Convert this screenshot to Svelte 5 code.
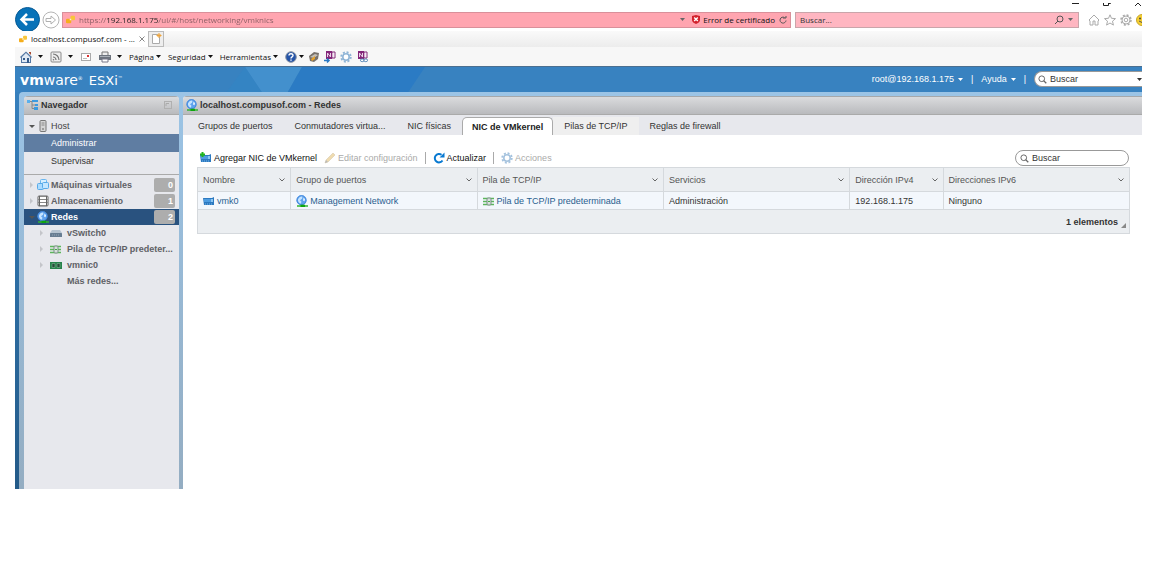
<script lang="ts">
	interface TreeItem {
		label: string;
		icon: string;
		count?: number;
		open?: boolean;
	}

	const baseUrl = 'https://192.168.1.175/ui/#/host/networking/vmknics';
	const menus = ['Página', 'Seguridad', 'Herramientas'];

	const inventory: TreeItem[] = [
		{ label: 'Máquinas virtuales', icon: 'vm', count: 0 },
		{ label: 'Almacenamiento', icon: 'storage', count: 1 },
		{ label: 'Redes', icon: 'network', count: 2, open: true }
	];

	const networks: TreeItem[] = [
		{ label: 'vSwitch0', icon: 'switch' },
		{ label: 'Pila de TCP/IP predeter...', icon: 'stack' },
		{ label: 'vmnic0', icon: 'nic' }
	];

	const tabs = [
		'Grupos de puertos',
		'Conmutadores virtua...',
		'NIC físicas',
		'NIC de VMkernel',
		'Pilas de TCP/IP',
		'Reglas de firewall'
	];

	const columns = [
		{ label: 'Nombre', size: 'narrow' },
		{ label: 'Grupo de puertos', size: 'wide' },
		{ label: 'Pila de TCP/IP', size: 'wide' },
		{ label: 'Servicios', size: 'wide' },
		{ label: 'Dirección IPv4', size: 'narrow' },
		{ label: 'Direcciones IPv6', size: 'wide' }
	];

	let url = $state(baseUrl);
	let activeTab = $state('NIC de VMkernel');
	let selected = $state('Redes');
</script>

{#snippet icon(name: string)}
	<svg class="icon" viewBox="0 0 12 12" aria-hidden="true">
		{#if name === 'vmware'}
			<rect x="0" y="5" width="7" height="6" rx="1.5" fill="#f5ae1c" />
			<rect x="6" y="1" width="6" height="6" rx="1.5" fill="#f8c63a" />
			<path d="M5 5h2v2H5z" fill="#fff3cf" />
		{:else if name === 'home'}
			<path d="M0 6L6 .5 12 6l-1 1v5H1V7z" fill="#5578a4" />
			<path d="M2 6l4-4 4 4v5H2z" fill="#dfe9f4" />
			<path d="M3 7h2v2H3zM7 7h2v5H7z" fill="#355b8a" />
			<path d="M9 1h2v3L9 2z" fill="#a64b32" />
		{:else if name === 'feed'}
			<rect x="1" y="1" width="10" height="10" rx="1" fill="#eee" stroke="#8a8a8a" />
			<path d="M3 3a6 6 0 0 1 6 6M3 6a3 3 0 0 1 3 3" fill="none" stroke="#777" stroke-width="1.2" />
			<circle cx="3.5" cy="8.7" r=".8" fill="#777" />
		{:else if name === 'mail'}
			<rect x="1.5" y="2.5" width="9" height="7" fill="#fff" stroke="#aaa" />
			<rect x="7" y="4" width="2" height="2" fill="#d33" />
			<path d="M3 7.5h4" stroke="#bbb" />
		{:else if name === 'print'}
			<path d="M3 1h6v4H3z" fill="#eee" stroke="#777" />
			<path d="M0 4h12v5H0z" fill="#6d747e" />
			<path d="M1 5h10v1H1z" fill="#a9afb7" />
			<path d="M3 8h6v3H3z" fill="#fff" stroke="#778" />
		{:else if name === 'help'}
			<circle cx="6" cy="6" r="5.3" fill="#2454a8" stroke="#8a94a3" />
			<path d="M4 4.5c0-2.4 4-2.2 4 0 0 1.5-2 1.3-2 3M6 8.5v1.2" fill="none" stroke="#fff" stroke-width="1.4" />
		{:else if name === 'bird'}
			<path d="M1 5l5-4 5 1-1 6-4 3-4-1z" fill="#77716b" />
			<path d="M2 6l5-3 3 1-4 3z" fill="#c4c0b9" />
			<path d="M3 8l4-3v3l-3 2z" fill="#e6a22b" />
		{:else if name === 'onenote' || name === 'onenote-link'}
			<path d="M2 0h6v8H2z" fill="#832679" />
			<path d="M8 1h3v6H8z" fill="#fff" stroke="#832679" />
			<path d="M3.5 6V2l3 4V2M8 3h2M8 5h2" fill="none" stroke="#e9d3e7" />
			{#if name === 'onenote'}
				<path d="M0 9.5h5M3 7.5l2 2-2 2" fill="none" stroke="#2878c4" stroke-width="1.5" />
			{:else}
				<rect x="4.5" y="8" width="3.5" height="2.6" rx="1.3" fill="#fff" stroke="#5284b5" />
				<rect x="8" y="8" width="3.5" height="2.6" rx="1.3" fill="#fff" stroke="#5284b5" />
			{/if}
		{:else if name === 'gear'}
			<circle cx="6" cy="6" r="4.8" fill="none" stroke="#8fb4d6" stroke-width="1.8" stroke-dasharray="2 1.77" />
			<circle cx="6" cy="6" r="3.2" fill="#fff" stroke="#8fb4d6" stroke-width="1.6" />
		{:else if name === 'tree'}
			<path d="M2 2.5h9M5 2v7.5h5M5 6h5" fill="none" stroke="#888" />
			<rect x="0" y="1" width="3" height="3" fill="#5bb0ec" />
			<rect x="5" y="1" width="6" height="2" fill="#3c9adf" />
			<rect x="8" y="5" width="3" height="2" fill="#3c9adf" />
			<rect x="7" y="8" width="4" height="3" fill="#3c9adf" />
		{:else if name === 'host'}
			<rect x="3" y=".5" width="6" height="11" rx="1" fill="#d5d5d5" stroke="#777" />
			<path d="M4.5 3h3M4.5 5h3" stroke="#888" />
			<circle cx="6" cy="9" r=".8" fill="#555" />
		{:else if name === 'vm'}
			<rect x="3.5" y=".5" width="6" height="6" rx="1" fill="#d6efff" stroke="#6ab6ef" />
			<rect x=".5" y="4.5" width="6" height="6" rx="1" fill="#aadbff" stroke="#58aae8" />
			<rect x="5.5" y="3.5" width="6" height="6" rx="1" fill="#c5e7ff" stroke="#58aae8" />
		{:else if name === 'storage'}
			<rect x="1" y="1" width="10" height="10" rx="1" fill="#fff" stroke="#666" />
			<path d="M1 1.5h10M1 4.5h10M1 7.5h10M1 10.5h10" stroke="#888" />
			<path d="M2.5 1v10M9.5 1v10" stroke="#666" />
		{:else if name === 'network'}
			<circle cx="5.5" cy="5.2" r="5" fill="#5fa3ee" />
			<circle cx="5.5" cy="5.2" r="4.6" fill="none" stroke="#3c82d8" stroke-width=".8" />
			<path d="M3.5 2.2q2-1.4 3-.4l-.5 2-2 1.4 1.5 1.5-.8 2q-2-.5-2.7-2.6t1.5-3.9z" fill="#c4e3ff" />
			<path d="M7.5 2.5l1.6 1.8-.6 2L7 5.5z" fill="#dff1ff" />
			<path d="M1 11h11" stroke="#31b531" stroke-width="1.5" />
			<rect x="4.5" y="9.7" width="4.5" height="2.3" fill="#0fa50f" />
		{:else if name === 'switch'}
			<path d="M2 3h8l2 3H0z" fill="#b5c3d0" />
			<rect x="0" y="6" width="12" height="4" rx=".5" fill="#677d92" />
			<path d="M2 8h8" stroke="#95a6b7" stroke-dasharray="1 1" />
		{:else if name === 'stack'}
			<path d="M0 3.5h11M0 6.5h11M0 9.5h11" stroke="#5bb65b" stroke-width="1.3" />
			<rect x="4" y="3" width="4" height="7" rx="1" fill="#d7e1dc" stroke="#7c8f88" />
			<path d="M5 6.5h2" stroke="#43ad43" />
		{:else if name === 'nic'}
			<rect x="0" y="3" width="12" height="7" fill="#27834b" />
			<path d="M2 4.5h3v4H2zM7 4.5h3v4H7z" fill="#254a38" stroke="#80b292" stroke-width=".6" />
		{:else if name === 'vmk' || name === 'vmk-add'}
			<path d="M0 3h9l2-1v8H1z" fill="#2c79c0" />
			<path d="M1 4h9v3H1z" fill="#4d9ce0" />
			<path d="M8 4h2v3H8z" fill="#8cc6f3" />
			<path d="M2 9h8" stroke="#79b5e6" stroke-dasharray="1 1" />
			{#if name === 'vmk-add'}
				<path d="M2.5 0v5M0 2.5h5" stroke="#20b51d" stroke-width="2" />
			{/if}
		{:else if name === 'edit'}
			<path d="M1 11l1-3 7-7 2 2-7 7z" fill="#ecd39c" stroke="#c5b38f" stroke-width=".5" />
			<path d="M1 11l1-3 2 2z" fill="#aaa" />
		{:else if name === 'refresh'}
			<path d="M9.5 8.5A4.2 4.2 0 1 1 8.5 2.8" fill="none" stroke="#0879d1" stroke-width="2" />
			<path d="M6.5 5.5h5V.5z" fill="#0879d1" />
		{:else if name === 'search'}
			<circle cx="5" cy="5" r="3.8" fill="none" stroke="#666" stroke-width="1.3" />
			<path d="M7.5 7.5L11 11" stroke="#666" stroke-width="1.8" />
		{/if}
	</svg>
{/snippet}

{#snippet caret()}
	<svg class="caret" viewBox="0 0 5 3" aria-hidden="true"><path d="M0 0h5L2.5 3z" fill="currentColor" /></svg>
{/snippet}

<div class="screen">
	<div class="window">
		<div class="window-controls">
			<button aria-label="Minimizar"><svg viewBox="0 0 8 6"><path d="M0 3.5h7" stroke="#222" /></svg></button>
			<button aria-label="Restaurar"><svg viewBox="0 0 8 6"><path d="M.5 3v2.5h5V3M5 3.5h2.5V3" fill="none" stroke="#222" /></svg></button>
			<button aria-label="Cerrar"><svg viewBox="0 0 8 6"><path d="M1 6l3-3 3 3" fill="none" stroke="#222" /></svg></button>
		</div>

		<div class="address-row">
			<button class="back" aria-label="Atrás">
				<svg viewBox="0 0 25 25">
					<circle cx="12.5" cy="12.5" r="12" fill="#0872b8" stroke="#075b96" />
					<path d="M19 12.5H7M12 7l-5.5 5.5L12 18" fill="none" stroke="#fff" stroke-width="2.5" />
				</svg>
			</button>
			<button class="forward" aria-label="Adelante">
				<svg viewBox="0 0 18 18">
					<circle cx="9" cy="9" r="8" fill="#fff" stroke="#b5b5b5" />
					<path d="M4 7.5h5V5l4.5 4L9 13v-2.5H4z" fill="#fff" stroke="#b0b0b0" />
				</svg>
			</button>
			<div class="address">
				{@render icon('vmware')}
				<input class="url" aria-label="Dirección" bind:value={url} />
				{@render caret()}
				<div class="certificate">
					<svg class="shield" viewBox="0 0 8 9" aria-hidden="true">
						<path d="M4 0l4 1v4c0 2-2 3-4 4-2-1-4-2-4-4V1z" fill="#d2222c" />
						<path d="M2.2 2.5l3.6 3.6M5.8 2.5L2.2 6.1" stroke="#fff" stroke-width="1.4" />
					</svg>
					<span>Error de certificado</span>
				</div>
				<button aria-label="Recargar">
					<svg class="reload" viewBox="0 0 8 8"><path d="M7 4.5A3 3 0 1 1 5.5 1.5M4 2h3V0" fill="none" stroke="#555" /></svg>
				</button>
			</div>
			<div class="address web-search">
				<input aria-label="Buscar en la web" placeholder="Buscar..." />
				<svg class="lens" viewBox="0 0 10 10" aria-hidden="true">
					<circle cx="6" cy="4" r="3" fill="none" stroke="#555" /><path d="M4 6L1 9" stroke="#555" />
				</svg>
				{@render caret()}
			</div>
			<div class="browser-tools">
				<button aria-label="Inicio"><svg viewBox="0 0 12 12"><path d="M1 6l5-5 5 5-1 1v4H7V7H5v4H2V7z" fill="#fff" stroke="#aaa" /></svg></button>
				<button aria-label="Favoritos"><svg viewBox="0 0 12 12"><path d="M6 .8l1.500 3.500 4 .3-3 2.600.9 3.900L6 9l-3.400 2.100.9-3.900-3-2.600 4-.3z" fill="#fff" stroke="#aaa" /></svg></button>
				<button aria-label="Herramientas"><svg viewBox="0 0 12 12"><circle cx="6" cy="6" r="5" fill="none" stroke="#aaa" stroke-width="1.5" stroke-dasharray="2 1.93" /><circle cx="6" cy="6" r="4" fill="#fff" stroke="#aaa" /><circle cx="6" cy="6" r="1.8" fill="none" stroke="#aaa" /></svg></button>
				<button class="smile" aria-label="Comentarios"><svg viewBox="0 0 12 12"><circle cx="6" cy="6" r="5.5" fill="#f6cf31" stroke="#c6a52d" /><circle cx="4" cy="4.5" r="1" fill="#444" /><path d="M3 7q3 3 6 0" fill="none" stroke="#555" /></svg></button>
			</div>
		</div>

		<div class="page-tabs">
			<button class="page-tab">
				{@render icon('vmware')}
				<span>localhost.compusof.com - ...</span>
				<svg class="close" viewBox="0 0 6 6"><path d="M.5 .5l5 5M5.5 .5l-5 5" stroke="#888" /></svg>
			</button>
			<button class="new-tab" aria-label="Nueva pestaña">
				<svg viewBox="0 0 12 12"><path d="M2.5 1.5h5l2 2v7h-7z" fill="#fff" stroke="#aaa" /><path d="M9 0v5M6.5 2.5h5M7.5 1l3 3M10.5 1l-3 3" stroke="#efa43a" /></svg>
			</button>
		</div>

		<div class="command-bar">
			<button aria-label="Página principal">{@render icon('home')}{@render caret()}</button>
			<button aria-label="Fuentes">{@render icon('feed')}{@render caret()}</button>
			<button aria-label="Correo">{@render icon('mail')}</button>
			<button aria-label="Imprimir">{@render icon('print')}{@render caret()}</button>
			{#each menus as menu}
				<button class="menu">{menu}{@render caret()}</button>
			{/each}
			<div class="add-ons">
				<button class="menu" aria-label="Ayuda">{@render icon('help')}{@render caret()}</button>
				<button aria-label="Traducir">{@render icon('bird')}</button>
				<button aria-label="Enviar a OneNote">{@render icon('onenote')}</button>
				<button aria-label="Opciones">{@render icon('gear')}</button>
				<button aria-label="Notas vinculadas">{@render icon('onenote-link')}</button>
			</div>
		</div>

		<div class="esxi">
			<header class="masthead">
				<svg class="facets" viewBox="0 0 460 30" aria-hidden="true">
					<path d="M230 0h57l-17 30h-20z" fill="#4390cd" />
					<path d="M230 0l-22 30h42z" fill="#3484c3" />
					<path d="M287 0h123l-20 30H270z" fill="#2b7bc4" />
				</svg>
				<div class="logo"><span><b>vm</b>ware<sup>®</sup></span><span class="product">ESXi<sup>™</sup></span></div>
				<div class="account">
					<button>root@192.168.1.175 {@render caret()}</button>
					<span>|</span>
					<button>Ayuda {@render caret()}</button>
					<span>|</span>
					<div class="search global">
						{@render icon('search')}
						<input aria-label="Búsqueda global" placeholder="Buscar" />
						{@render caret()}
					</div>
				</div>
			</header>

			<div class="workspace">
				<nav class="sidebar">
					<h2 class="panel-title">
						{@render icon('tree')}
						<span>Navegador</span>
						<svg class="pin" viewBox="0 0 8 8"><rect x=".5" y=".5" width="7" height="7" fill="none" stroke="#b0b0b0" /><path d="M2 5V2.5h3" fill="none" stroke="#aaa" /></svg>
					</h2>
					<div class="host-group">
						<button class="node host"><span class="arrow open"></span>{@render icon('host')}<span>Host</span></button>
						<button class="leaf current">Administrar</button>
						<button class="leaf">Supervisar</button>
					</div>
					{#each inventory as item}
						<button class="node" class:selected={selected === item.label} onclick={() => (selected = item.label)}>
							<span class="arrow" class:open={item.open}></span>
							{@render icon(item.icon)}
							<span class="label">{item.label}</span>
							<span class="badge">{item.count}</span>
						</button>
					{/each}
					{#each networks as item}
						<button class="node child">
							<span class="arrow"></span>
							{@render icon(item.icon)}
							<span class="label">{item.label}</span>
						</button>
					{/each}
					<button class="node more">Más redes...</button>
				</nav>

				<main class="content">
					<h1 class="panel-title">
						{@render icon('network')}
						<span>localhost.compusof.com - Redes</span>
					</h1>
					<div class="tabs" role="tablist">
						{#each tabs as tab}
							<button
								class="tab"
								class:active={tab === activeTab}
								class:hovered={tab === 'Pilas de TCP/IP'}
								role="tab"
								aria-selected={tab === activeTab}
								onclick={() => (activeTab = tab)}>{tab}</button
							>
						{/each}
					</div>

					<div class="panel">
						<div class="toolbar">
							<button>{@render icon('vmk-add')}Agregar NIC de VMkernel</button>
							<button disabled>{@render icon('edit')}Editar configuración</button>
							<span class="divider"></span>
							<button>{@render icon('refresh')}Actualizar</button>
							<span class="divider"></span>
							<button disabled>{@render icon('gear')}Acciones</button>
							<div class="search">
								{@render icon('search')}
								<input aria-label="Buscar NIC" placeholder="Buscar" />
							</div>
						</div>

						<table>
							<thead>
								<tr>
									{#each columns as column}
										<th class={column.size}>
											<div class="heading">
												{column.label}
												<svg class="chevron" viewBox="0 0 6 4" aria-hidden="true"><path d="M.5 .5L3 3 5.5 .5" fill="none" stroke="#666" /></svg>
											</div>
										</th>
									{/each}
								</tr>
							</thead>
							<tbody>
								<tr>
									<td><a href="#/vmk0">{@render icon('vmk')}vmk0</a></td>
									<td><a href="#/management">{@render icon('network')}Management Network</a></td>
									<td><a href="#/tcpip">{@render icon('stack')}Pila de TCP/IP predeterminada</a></td>
									<td>Administración</td>
									<td>192.168.1.175</td>
									<td>Ninguno</td>
								</tr>
							</tbody>
							<tfoot>
								<tr>
									<td colspan="6">
										<div class="summary">
											1 elementos
											<svg class="grip" viewBox="0 0 5 5" aria-hidden="true"><path d="M5 0v5H0z" fill="#888" /></svg>
										</div>
									</td>
								</tr>
							</tfoot>
						</table>
					</div>
				</main>
			</div>
		</div>
	</div>
</div>

<style>
	:global(body) {
		background: #fff;
	}

	.screen {
		box-sizing: border-box;
		min-height: 100vh;
		display: flex;
		padding: 0 17px 78px 15px;
	}

	.window {
		flex: 1;
		min-width: 0;
		display: flex;
		flex-direction: column;
		overflow: hidden;
		font: 8px/12px 'Open Sans', sans-serif;
		color: #111;
	}

	button,
	input {
		margin: 0;
		padding: 0;
		border: 0;
		background: none;
		font: inherit;
		color: inherit;
	}

	button {
		display: flex;
		align-items: center;
		text-align: left;
		white-space: nowrap;
	}

	input {
		min-width: 0;
		outline: 0;
	}

	input::placeholder {
		color: #333;
		opacity: 1;
	}

	svg {
		display: block;
		flex: none;
	}

	.icon {
		width: 12px;
		height: 12px;
	}

	.caret {
		width: 5px;
		height: 3px;
	}

	.window-controls {
		height: 8px;
		display: flex;
		justify-content: flex-end;
		align-items: flex-start;
		gap: 23px;
	}

	.window-controls svg {
		width: 8px;
		height: 6px;
	}

	.address-row {
		height: 23px;
		display: flex;
		align-items: center;
	}

	.back svg {
		width: 25px;
		height: 25px;
	}

	.forward svg {
		width: 18px;
		height: 18px;
		margin: 0 2px;
	}

	.address {
		box-sizing: border-box;
		flex: 1;
		height: 16px;
		display: flex;
		align-items: center;
		gap: 4px;
		padding: 0 3px;
		border: 1px solid #d9909a;
		background: #ffa5b0;
	}

	.address .icon {
		width: 9px;
		height: 9px;
	}

	.address .caret {
		color: #666;
	}

	/* the host part of the address is darker than the rest */
	.url {
		flex: 1;
		background: linear-gradient(90deg, #8a5d63 27px, #222 27px, #222 79px, #8a5d63 79px);
		background-clip: text;
		color: transparent;
	}

	.certificate {
		display: flex;
		align-items: center;
		gap: 3px;
		padding-left: 3px;
	}

	.shield {
		width: 8px;
		height: 9px;
	}

	.reload {
		width: 8px;
		height: 8px;
	}

	.web-search {
		flex: 0 0 284px;
		margin-left: 4px;
		padding: 0 5px 0 4px;
		border-color: #c9a5aa;
		background: #ffb6c1;
	}

	.web-search input {
		flex: 1;
	}

	.lens {
		width: 10px;
		height: 10px;
	}

	.browser-tools {
		flex: 0 0 63px;
		display: flex;
		justify-content: flex-end;
		gap: 4px;
		overflow: hidden;
	}

	.browser-tools svg {
		width: 12px;
		height: 12px;
	}

	.smile {
		width: 6px;
		overflow: hidden;
	}

	.page-tabs {
		height: 16px;
		display: flex;
		background: linear-gradient(#fafafa, #ececec);
	}

	.page-tab {
		width: 133px;
		gap: 4px;
		padding: 0 3px 0 4px;
		background: #fff;
	}

	.page-tab .icon {
		width: 8px;
		height: 8px;
	}

	.page-tab span {
		flex: 1;
	}

	.close {
		width: 6px;
		height: 6px;
	}

	.new-tab {
		justify-content: center;
		width: 16px;
		border: 1px solid #bbb;
		background: #eee;
	}

	.new-tab svg {
		width: 12px;
		height: 12px;
	}

	.command-bar {
		height: 19px;
		display: flex;
		align-items: center;
		gap: 7px;
		padding-left: 5px;
		background: #f7f7f7;
	}

	.command-bar button {
		gap: 6px;
	}

	.command-bar .menu {
		gap: 2px;
	}

	.add-ons {
		display: flex;
		gap: 4px;
	}

	.esxi {
		flex: 1;
		display: flex;
		flex-direction: column;
		font: 9px/12px 'Liberation Sans', Arial, sans-serif;
		background: linear-gradient(#3882c0, #235a88);
	}

	.masthead {
		position: relative;
		height: 26px;
		display: flex;
		align-items: center;
		justify-content: space-between;
		background: #3882c0;
		box-shadow: inset 0 1px #4b6f90;
		color: #fff;
	}

	.facets {
		position: absolute;
		left: 0;
		top: 1px;
		width: 460px;
		height: 30px;
	}

	.logo {
		position: relative;
		display: flex;
		align-items: baseline;
		gap: 6px;
		padding: 2px 0 0 5px;
		font: 14px/20px 'DejaVu Sans', sans-serif;
	}

	.logo sup {
		font-size: 5px;
		line-height: 5px;
		vertical-align: 5px;
	}

	.product {
		font-size: 13px;
	}

	.account {
		display: flex;
		align-items: center;
		gap: 8px;
	}

	.account button {
		gap: 4px;
	}

	.search {
		box-sizing: border-box;
		width: 114px;
		height: 16px;
		display: flex;
		align-items: center;
		gap: 3px;
		padding: 0 4px;
		border: 1px solid #999;
		border-radius: 8px;
		background: #fff;
		color: #333;
	}

	.search .icon {
		width: 9px;
		height: 9px;
	}

	.search input {
		flex: 1;
	}

	.global {
		width: 108px;
		padding: 0 0 0 3px;
		border-right: 0;
		border-radius: 8px 0 0 8px;
	}

	.workspace {
		position: relative;
		flex: 1;
		display: flex;
		gap: 4px;
		margin-left: 4px;
		padding: 4px 0 0 5px;
		border-radius: 4px 0 0;
		background: linear-gradient(#9bc4e6, #94adc2);
	}

	.sidebar {
		flex: 0 0 155px;
		border-radius: 4px 4px 0 0;
		background: #e7e8ed;
		overflow: hidden;
	}

	.panel-title {
		box-sizing: border-box;
		height: 19px;
		display: flex;
		align-items: center;
		gap: 2px;
		margin: 0;
		padding: 0 7px 0 3px;
		border-bottom: 1px solid #aaa;
		background: linear-gradient(#dcdddf, #b9babd);
		box-shadow: inset 0 1px #a5a8ab;
		font-size: 9px;
		line-height: 12px;
		color: #333;
	}

	.panel-title span {
		flex: 1;
	}

	.pin {
		width: 8px;
		height: 8px;
	}

	.host-group {
		padding: 3px 0 4px;
		margin-bottom: 2px;
		border-bottom: 1px solid #aaa;
	}

	.node {
		width: 100%;
		height: 16px;
		gap: 2px;
		padding: 0 4px 0 5px;
		font-weight: bold;
		color: #606166;
	}

	.host {
		font-weight: normal;
		color: #444;
	}

	.label {
		flex: 1;
	}

	.arrow {
		width: 6px;
		height: 6px;
		background: #c4c5ca;
		clip-path: polygon(1px 0, 4px 3px, 1px 6px);
	}

	.arrow.open {
		background: #555;
		clip-path: polygon(0 2px, 6px 2px, 3px 5px);
	}

	.leaf {
		width: 100%;
		height: 18px;
		padding-left: 27px;
		color: #333;
	}

	.current {
		background: #5f7da2;
		color: #fff;
	}

	.selected {
		background: #29527f;
		color: #fff;
	}

	.badge {
		box-sizing: border-box;
		width: 21px;
		height: 14px;
		padding-right: 2px;
		border-radius: 2px;
		background: #adadad;
		line-height: 14px;
		text-align: right;
		color: #fff;
	}

	.child {
		gap: 5px;
		padding-left: 15px;
	}

	.more {
		padding-left: 43px;
	}

	.content {
		flex: 1;
		min-width: 0;
		border-radius: 4px 0 0;
		background: #fff;
		overflow: hidden;
	}

	.tabs {
		height: 20px;
		display: flex;
		align-items: flex-end;
		padding-left: 4px;
		background: #e7e8ed;
	}

	.tab {
		box-sizing: border-box;
		height: 18px;
		padding: 0 11px;
		color: #333;
	}

	.tab.active {
		padding: 0 9px;
		border: 1px solid #aaa;
		border-bottom: 0;
		border-radius: 5px 5px 0 0;
		background: #fff;
		font-weight: bold;
		color: #222;
	}

	.tab.hovered {
		background: #efefef;
	}

	.panel {
		padding: 15px 12px 0 14px;
	}

	.toolbar {
		display: flex;
		align-items: center;
		gap: 7px;
		padding: 0 1px 1px 3px;
	}

	.toolbar button {
		gap: 2px;
	}

	.toolbar button:disabled {
		color: #aaa;
	}

	.toolbar button:disabled .icon {
		opacity: 0.8;
	}

	.divider {
		width: 1px;
		height: 12px;
		background: #aaa;
	}

	.toolbar .search {
		margin-left: auto;
	}

	table {
		width: 100%;
		table-layout: fixed;
		border-collapse: collapse;
	}

	th,
	td {
		box-sizing: border-box;
		padding: 0 5px;
		border: 1px solid #d5d9dd;
		font-weight: normal;
		text-align: left;
		color: #333;
	}

	th {
		height: 24px;
		background: #ebeef1;
		color: #555;
	}

	.narrow {
		width: 10%;
	}

	.wide {
		width: 20%;
	}

	.heading {
		display: flex;
		align-items: center;
		justify-content: space-between;
	}

	.chevron {
		width: 6px;
		height: 4px;
	}

	tbody td {
		height: 18px;
		background: #f3f7fc;
	}

	td a {
		display: flex;
		align-items: center;
		gap: 2px;
		color: #29608f;
		text-decoration: none;
	}

	tfoot td {
		height: 24px;
		padding-right: 3px;
		background: #ebeef1;
		font-weight: bold;
	}

	.summary {
		display: flex;
		justify-content: flex-end;
		align-items: center;
		gap: 3px;
	}

	.grip {
		width: 5px;
		height: 5px;
		align-self: flex-end;
	}
</style>
